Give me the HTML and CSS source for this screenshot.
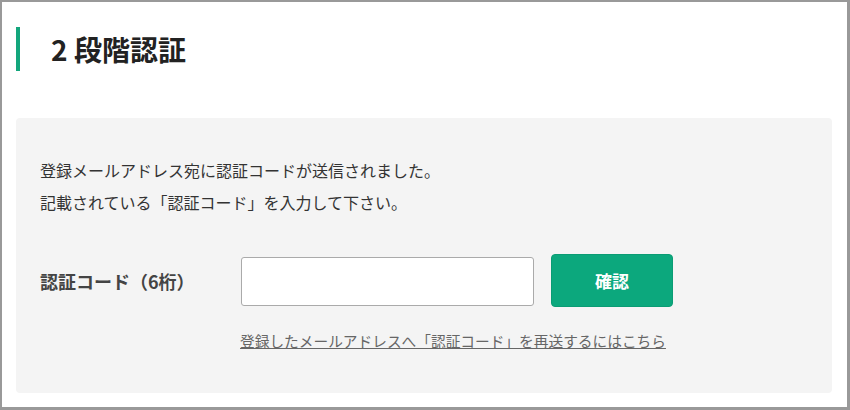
FILE: index.html
```html
<!DOCTYPE html>
<html lang="ja">
<head>
  <meta charset="UTF-8" />
  <meta name="viewport" content="width=device-width, initial-scale=1.0" />
  <title>2段階認証</title>
  <link rel="stylesheet" href="styles.css">
</head>
<body>
  <div class="frame">
    <h1 class="title">2 段階認証</h1>
    <div class="panel">
      <p class="lead">登録メールアドレス宛に認証コードが送信されました。<br>記載されている「認証コード」を入力して下さい。</p>
      <form class="code-form" onsubmit="return false;">
        <label class="code-label" for="code">認証コード（6桁）</label>
        <input class="code-input" id="code" type="text" maxlength="6">
        <button class="code-btn" type="submit">確認</button>
      </form>
      <p class="resend"><a href="#">登録したメールアドレスへ「認証コード」を再送するにはこちら</a></p>
    </div>
  </div>
</body>
</html>
```

FILE: styles.css
```css
* {
  box-sizing: border-box;
}
body {
  margin: 0;
  font-family: "Noto Sans CJK JP", "Noto Sans", sans-serif;
  color: #333;
  background-color: #fff;
}
.frame {
  width: 850px;
  height: 410px;
  border: 2px solid #999;
  border-right-width: 3px;
  border-bottom-width: 3px;
  padding: 25px 15px 0 14px;
}
.title {
  margin: 0 0 47px;
  height: 44px;
  line-height: 44px;
  border-left: 4px solid #13a67c;
  padding-left: 31px;
  font-size: 28px;
  font-weight: bold;
  color: #222;
}
.panel {
  background-color: #f4f4f4;
  border-radius: 4px;
  padding: 36px 24px 40px;
}
.lead {
  margin: 0 0 36px;
  font-size: 16px;
  line-height: 32px;
  color: #333;
}
.code-form {
  display: flex;
  align-items: center;
}
.code-label {
  width: 201px;
  font-size: 18px;
  font-weight: bold;
  color: #444;
}
.code-input {
  width: 293px;
  height: 49px;
  border: 1px solid #aaa;
  border-radius: 3px;
  background-color: #fff;
  font-size: 16px;
  padding: 0 10px;
  margin: 2px 0 0;
}
.code-btn {
  margin-left: 17px;
  width: 122px;
  height: 53px;
  border: 1px solid #0a9c74;
  border-radius: 4px;
  background-color: #0ca87d;
  color: #fff;
  font-family: inherit;
  font-size: 17px;
  font-weight: bold;
  cursor: pointer;
}
.resend {
  margin: 22px 0 0 200px;
  font-size: 14.7px;
  line-height: 24px;
}
.resend a {
  color: #666;
  text-decoration: underline;
}
```
